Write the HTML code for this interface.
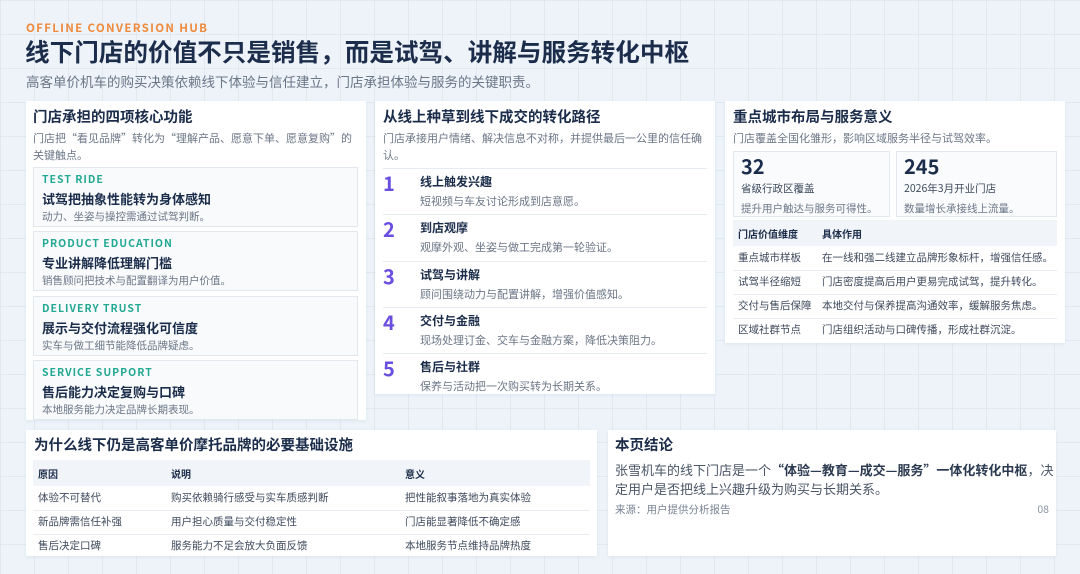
<!DOCTYPE html>
<html><head><meta charset="utf-8"><style>
*{margin:0;padding:0;box-sizing:border-box}
body{width:1080px;height:574px;overflow:hidden;position:relative;font-family:"Noto Sans CJK SC","Liberation Sans",sans-serif;line-height:1.3;color:#1b2d4a;
background-color:#edf3f9;background-image:linear-gradient(rgba(200,215,230,.35) 1px,transparent 1px),linear-gradient(90deg,rgba(200,215,230,.35) 1px,transparent 1px);background-size:34px 34px}
.a{position:absolute;white-space:nowrap}
.p{position:absolute;background:#fff;box-shadow:0 1px 3px rgba(30,60,100,.08);overflow:hidden}
.h{font-size:14.5px;font-weight:700;color:#1b2d4a}
.d{font-size:11px;color:#6b7686;line-height:17px;white-space:normal}
.card{position:absolute;left:7px;width:325px;background:#f8fafc;border:1px solid #e3e8ef;height:60px}
.card .l{position:absolute;left:8px;top:5px;font-size:10.5px;font-weight:700;color:#22a893;letter-spacing:1px}
.card .t{position:absolute;left:8px;top:23px;font-size:13px;font-weight:700;color:#1b2d4a}
.card .s{position:absolute;left:8px;top:42px;font-size:10.5px;color:#6b7686}
.it{position:absolute;left:8px;width:324px;height:47px;border-top:1px solid #e6ebf1}
.it .n{position:absolute;left:0;top:1px;font-size:20px;font-weight:700;color:#6a4ee0}
.it .t{position:absolute;left:37px;top:5px;font-size:12px;font-weight:700;color:#1b2d4a}
.it .s{position:absolute;left:37px;top:25px;font-size:11px;color:#6b7686}
table{border-collapse:collapse;position:absolute;font-size:10.5px;color:#3e4a5c}
td{height:24px;padding-left:5px;border-bottom:1px solid #e9edf2;white-space:nowrap}
th{height:26px;text-align:left;padding-left:5px;background:#f1f4f8;font-weight:700;color:#1b2d4a;font-size:10px}
.st{position:absolute;top:50px;height:66px;border:1px solid #e3e8ef;background:#f9fbfd}
.st .n{position:absolute;left:7px;top:1px;font-size:20px;font-weight:700;color:#1b2d4a}
.st .l{position:absolute;left:7px;top:30px;font-size:10.5px;color:#3e4a5c}
.st .s{position:absolute;left:7px;top:50px;font-size:10.5px;color:#6b7686}
</style></head><body>
<div class="a" style="left:26px;top:21px;font-size:11.5px;font-weight:700;color:#f08a3c;letter-spacing:1.3px">OFFLINE CONVERSION HUB</div>
<div class="a" style="left:25px;top:36px;font-size:24.6px;font-weight:700;color:#1b2d4a">线下门店的价值不只是销售，而是试驾、讲解与服务转化中枢</div>
<div class="a" style="left:26px;top:73px;font-size:13.5px;color:#6b7686">高客单价机车的购买决策依赖线下体验与信任建立，门店承担体验与服务的关键职责。</div>

<div class="p" style="left:26px;top:101px;width:340px;height:319px">
<div class="a h" style="left:7px;top:7px">门店承担的四项核心功能</div>
<div class="a d" style="left:7px;top:29px;width:322px">门店把“看见品牌”转化为“理解产品、愿意下单、愿意复购”的关键触点。</div>
<div class="card" style="top:66px"><div class="l">TEST RIDE</div><div class="t">试驾把抽象性能转为身体感知</div><div class="s">动力、坐姿与操控需通过试驾判断。</div></div>
<div class="card" style="top:130px"><div class="l">PRODUCT EDUCATION</div><div class="t">专业讲解降低理解门槛</div><div class="s">销售顾问把技术与配置翻译为用户价值。</div></div>
<div class="card" style="top:195px"><div class="l">DELIVERY TRUST</div><div class="t">展示与交付流程强化可信度</div><div class="s">实车与做工细节能降低品牌疑虑。</div></div>
<div class="card" style="top:259px"><div class="l">SERVICE SUPPORT</div><div class="t">售后能力决定复购与口碑</div><div class="s">本地服务能力决定品牌长期表现。</div></div>
</div>

<div class="p" style="left:375px;top:101px;width:340px;height:293px">
<div class="a h" style="left:8px;top:7px">从线上种草到线下成交的转化路径</div>
<div class="a d" style="left:8px;top:29px;width:326px">门店承接用户情绪、解决信息不对称，并提供最后一公里的信任确认。</div>
<div class="it" style="top:67px"><div class="n">1</div><div class="t">线上触发兴趣</div><div class="s">短视频与车友讨论形成到店意愿。</div></div>
<div class="it" style="top:113px"><div class="n">2</div><div class="t">到店观摩</div><div class="s">观摩外观、坐姿与做工完成第一轮验证。</div></div>
<div class="it" style="top:160px"><div class="n">3</div><div class="t">试驾与讲解</div><div class="s">顾问围绕动力与配置讲解，增强价值感知。</div></div>
<div class="it" style="top:206px"><div class="n">4</div><div class="t">交付与金融</div><div class="s">现场处理订金、交车与金融方案，降低决策阻力。</div></div>
<div class="it" style="top:252px"><div class="n">5</div><div class="t">售后与社群</div><div class="s">保养与活动把一次购买转为长期关系。</div></div>
</div>

<div class="p" style="left:725px;top:101px;width:340px;height:242px">
<div class="a h" style="left:8px;top:7px">重点城市布局与服务意义</div>
<div class="a d" style="left:8px;top:29px">门店覆盖全国化雏形，影响区域服务半径与试驾效率。</div>
<div class="st" style="left:8px;width:157px"><div class="n">32</div><div class="l">省级行政区覆盖</div><div class="s">提升用户触达与服务可得性。</div></div>
<div class="st" style="left:171px;width:161px"><div class="n">245</div><div class="l">2026年3月开业门店</div><div class="s">数量增长承接线上流量。</div></div>
<table style="left:8px;top:119px;width:324px"><tr><th style="width:84px">门店价值维度</th><th>具体作用</th></tr>
<tr><td>重点城市样板</td><td>在一线和强二线建立品牌形象标杆，增强信任感。</td></tr>
<tr><td>试驾半径缩短</td><td>门店密度提高后用户更易完成试驾，提升转化。</td></tr>
<tr><td>交付与售后保障</td><td>本地交付与保养提高沟通效率，缓解服务焦虑。</td></tr>
<tr><td style="border:none">区域社群节点</td><td style="border:none">门店组织活动与口碑传播，形成社群沉淀。</td></tr></table>
</div>

<div class="p" style="left:26px;top:430px;width:571px;height:126px">
<div class="a h" style="left:8px;top:6px">为什么线下仍是高客单价摩托品牌的必要基础设施</div>
<table style="left:7px;top:30px;width:557px"><tr><th style="width:133px">原因</th><th style="width:234px">说明</th><th>意义</th></tr>
<tr><td>体验不可替代</td><td>购买依赖骑行感受与实车质感判断</td><td>把性能叙事落地为真实体验</td></tr>
<tr><td>新品牌需信任补强</td><td>用户担心质量与交付稳定性</td><td>门店能显著降低不确定感</td></tr>
<tr><td style="border:none">售后决定口碑</td><td style="border:none">服务能力不足会放大负面反馈</td><td style="border:none">本地服务节点维持品牌热度</td></tr></table>
</div>

<div class="p" style="left:608px;top:430px;width:448px;height:126px">
<div class="a h" style="left:7px;top:6px">本页结论</div>
<div class="a" style="left:7px;top:30px;width:440px;white-space:normal;font-size:13px;line-height:19px;color:#4a5566">张雪机车的线下门店是一个<b style="color:#2b3a50">“体验—教育—成交—服务”一体化转化中枢</b>，决定用户是否把线上兴趣升级为购买与长期关系。</div>
<div class="a" style="left:7px;top:73px;font-size:10.5px;color:#7a8494">来源：用户提供分析报告</div>
<div class="a" style="right:7px;top:73px;font-size:10.5px;color:#8a94a2">08</div>
</div>
</body></html>
